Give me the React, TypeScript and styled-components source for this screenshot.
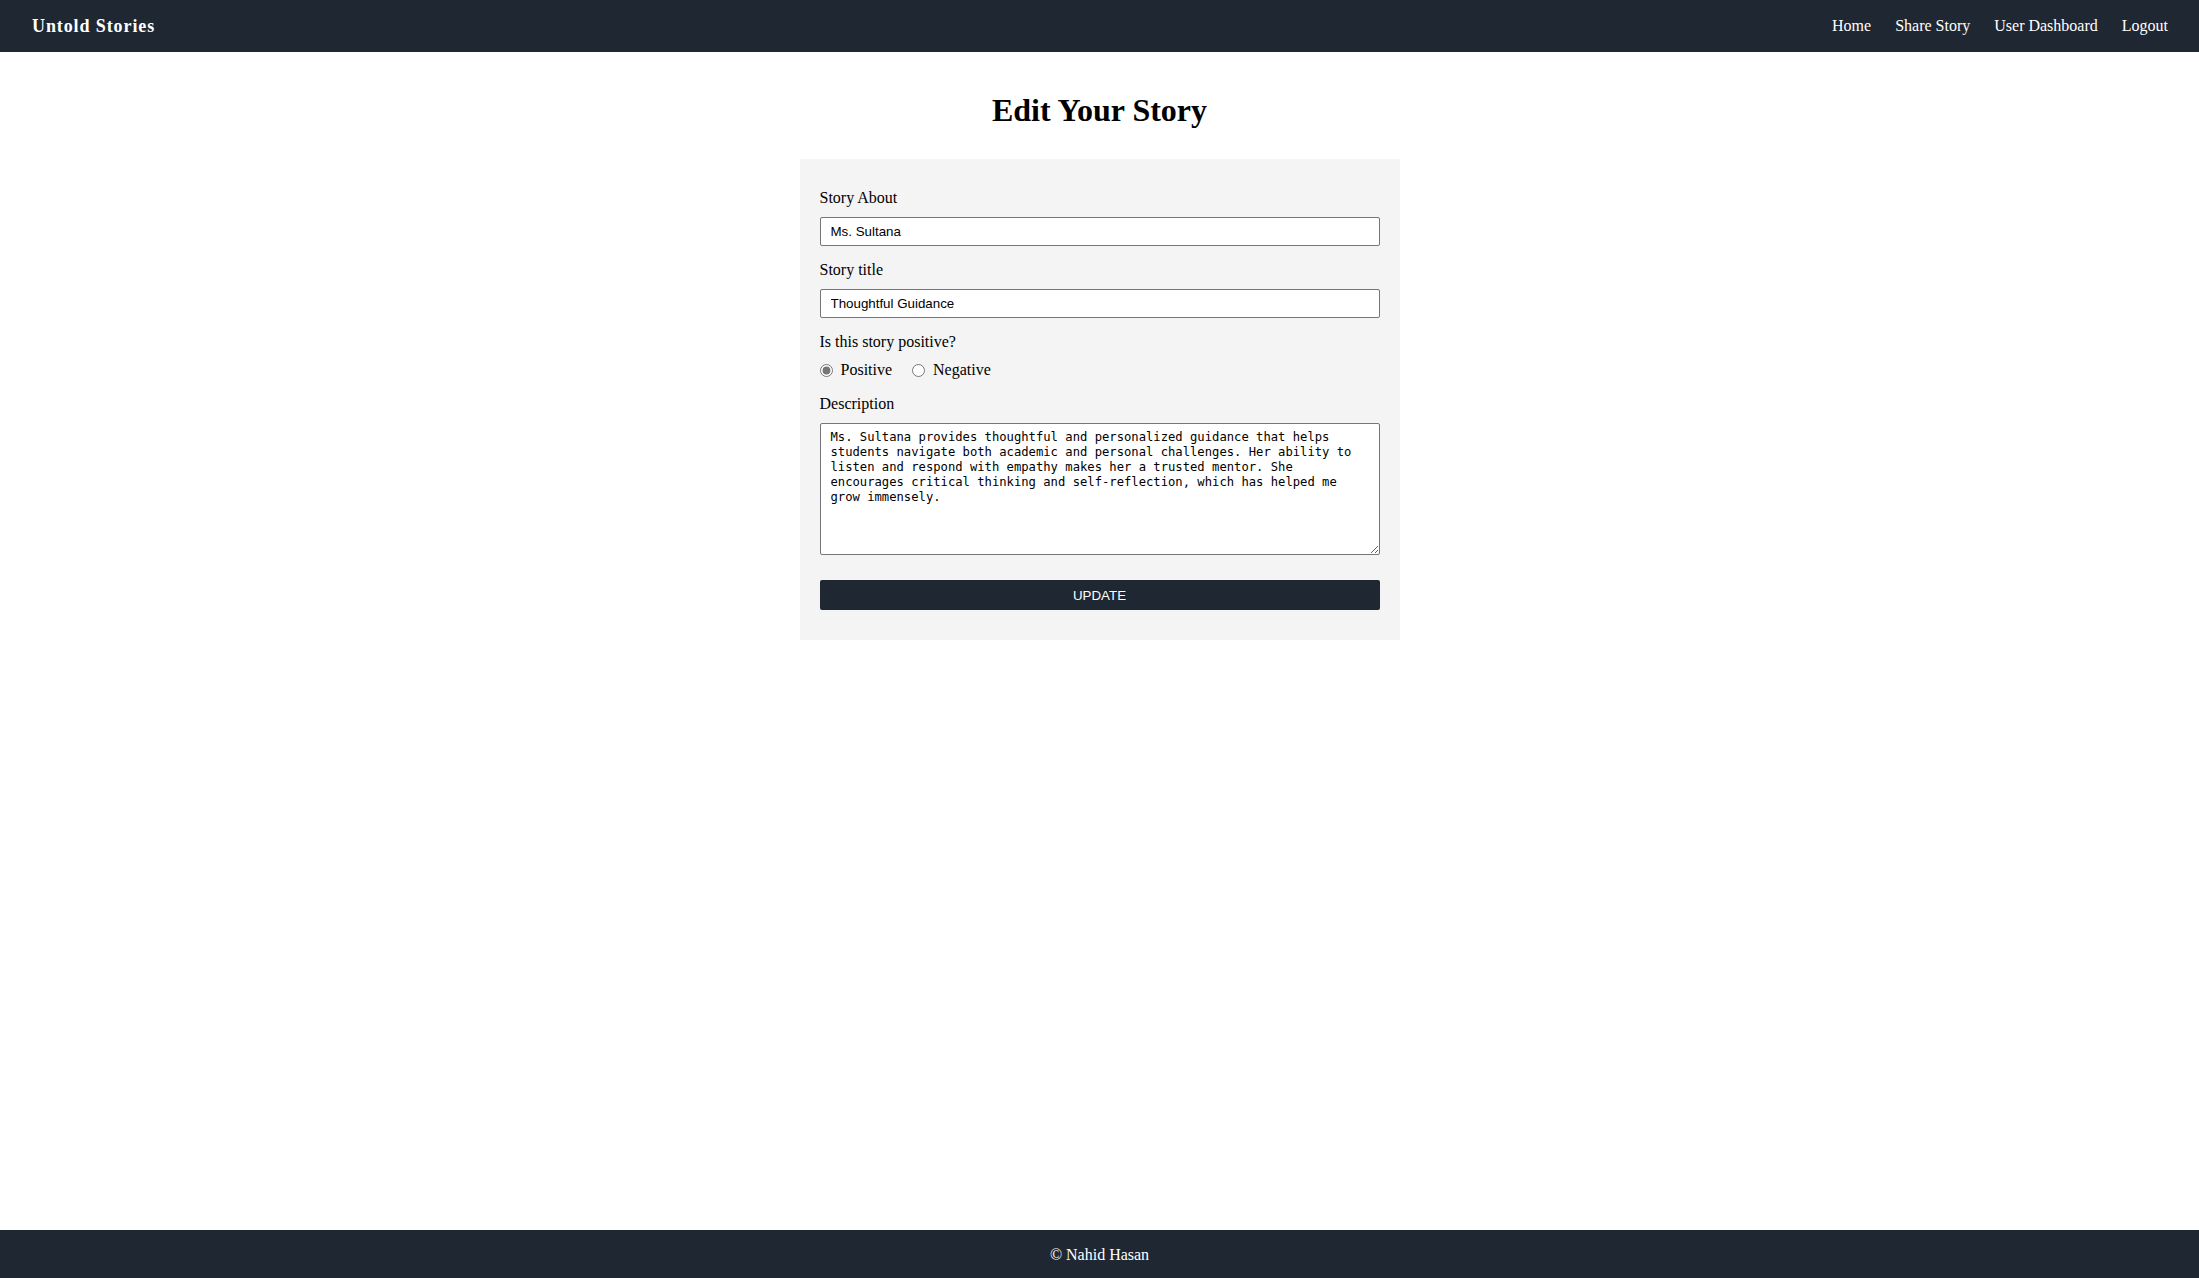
import React from "react";
import styled, { createGlobalStyle } from "styled-components";

const GlobalStyle = createGlobalStyle`
  html, body {
    margin: 0;
    padding: 0;
    background: #ffffff;
    font-family: "Liberation Serif", "Times New Roman", serif;
    font-size: 16px;
    color: #000000;
  }
  #root {
    min-height: 100vh;
  }
`;

const Page = styled.div`
  min-height: 100vh;
  display: flex;
  flex-direction: column;
`;

const Header = styled.header`
  height: 52px;
  background: #1f2733;
  color: #ffffff;
  display: flex;
  align-items: center;
  justify-content: space-between;
  padding: 0 31px 0 32px;
  box-sizing: border-box;
`;

const Logo = styled.div`
  font-size: 18px;
  font-weight: 700;
  letter-spacing: 0.05em;
  line-height: 24px;
`;

const Nav = styled.nav`
  display: flex;
  align-items: center;
  gap: 24px;
`;

const NavLink = styled.a`
  color: #ffffff;
  text-decoration: none;
  font-size: 16px;
  line-height: 20px;
`;

const Main = styled.main`
  flex: 1;
  display: flex;
  flex-direction: column;
  align-items: center;
  padding-top: 40px;
`;

const Title = styled.h1`
  margin: 0 0 31px;
  font-size: 32px;
  font-weight: 700;
  line-height: 36px;
`;

const Card = styled.form`
  width: 600px;
  box-sizing: border-box;
  background: #f4f4f4;
  padding: 30px 20px;
  display: flex;
  flex-direction: column;
`;

const Group = styled.div<{ $gap?: number }>`
  display: flex;
  flex-direction: column;
  margin-bottom: ${(p) => p.$gap ?? 15}px;
`;

const Label = styled.label`
  display: block;
  font-size: 16px;
  line-height: 18px;
  margin-bottom: 10px;
`;

const TextInput = styled.input`
  display: block;
  width: 100%;
  height: 29px;
  box-sizing: border-box;
  padding: 0 10px;
  border: 1px solid #767676;
  border-radius: 2px;
  background: #ffffff;
  font-family: "Liberation Sans", Arial, sans-serif;
  font-size: 13.33px;
  color: #000000;
  outline: none;
`;

const RadioRow = styled.div`
  display: flex;
  align-items: center;
  gap: 20px;
  height: 18px;
`;

const RadioOption = styled.label`
  display: inline-flex;
  align-items: center;
  gap: 8px;
  font-size: 16px;
  line-height: 18px;
`;

const Radio = styled.input`
  width: 13px;
  height: 13px;
  margin: 0;
  accent-color: #767676;
`;

const TextArea = styled.textarea`
  display: block;
  width: 100%;
  height: 132px;
  box-sizing: border-box;
  padding: 6px 10px;
  border: 1px solid #767676;
  border-radius: 2px;
  background: #ffffff;
  font-family: "DejaVu Sans Mono", "Liberation Mono", monospace;
  font-size: 12.2px;
  line-height: 15px;
  color: #000000;
  outline: none;
  resize: vertical;
`;

const Button = styled.button`
  margin-top: 10px;
  height: 30px;
  width: 100%;
  border: none;
  border-radius: 2px;
  background: #1f2733;
  color: #ffffff;
  font-family: "Liberation Sans", Arial, sans-serif;
  font-size: 13.33px;
  cursor: pointer;
`;

const Footer = styled.footer`
  height: 48px;
  background: #1f2733;
  color: #ffffff;
  display: flex;
  align-items: center;
  justify-content: center;
  font-size: 16px;
  line-height: 18px;
  padding-top: 2px;
  box-sizing: border-box;
`;

const description =
  "Ms. Sultana provides thoughtful and personalized guidance that helps students navigate both academic and personal challenges. Her ability to listen and respond with empathy makes her a trusted mentor. She encourages critical thinking and self-reflection, which has helped me grow immensely.";

export default function App() {
  return (
    <>
      <GlobalStyle />
      <Page>
        <Header>
          <Logo>Untold Stories</Logo>
          <Nav>
            <NavLink href="#">Home</NavLink>
            <NavLink href="#">Share Story</NavLink>
            <NavLink href="#">User Dashboard</NavLink>
            <NavLink href="#">Logout</NavLink>
          </Nav>
        </Header>
        <Main>
          <Title>Edit Your Story</Title>
          <Card onSubmit={(e) => e.preventDefault()}>
            <Group>
              <Label htmlFor="about">Story About</Label>
              <TextInput id="about" type="text" defaultValue="Ms. Sultana" />
            </Group>
            <Group>
              <Label htmlFor="title">Story title</Label>
              <TextInput id="title" type="text" defaultValue="Thoughtful Guidance" />
            </Group>
            <Group $gap={16}>
              <Label as="div">Is this story positive?</Label>
              <RadioRow>
                <RadioOption>
                  <Radio type="radio" name="positive" value="positive" defaultChecked />
                  Positive
                </RadioOption>
                <RadioOption>
                  <Radio type="radio" name="positive" value="negative" />
                  Negative
                </RadioOption>
              </RadioRow>
            </Group>
            <Group>
              <Label htmlFor="description">Description</Label>
              <TextArea id="description" defaultValue={description} />
            </Group>
            <Button type="submit">UPDATE</Button>
          </Card>
        </Main>
        <Footer>© Nahid Hasan</Footer>
      </Page>
    </>
  );
}
